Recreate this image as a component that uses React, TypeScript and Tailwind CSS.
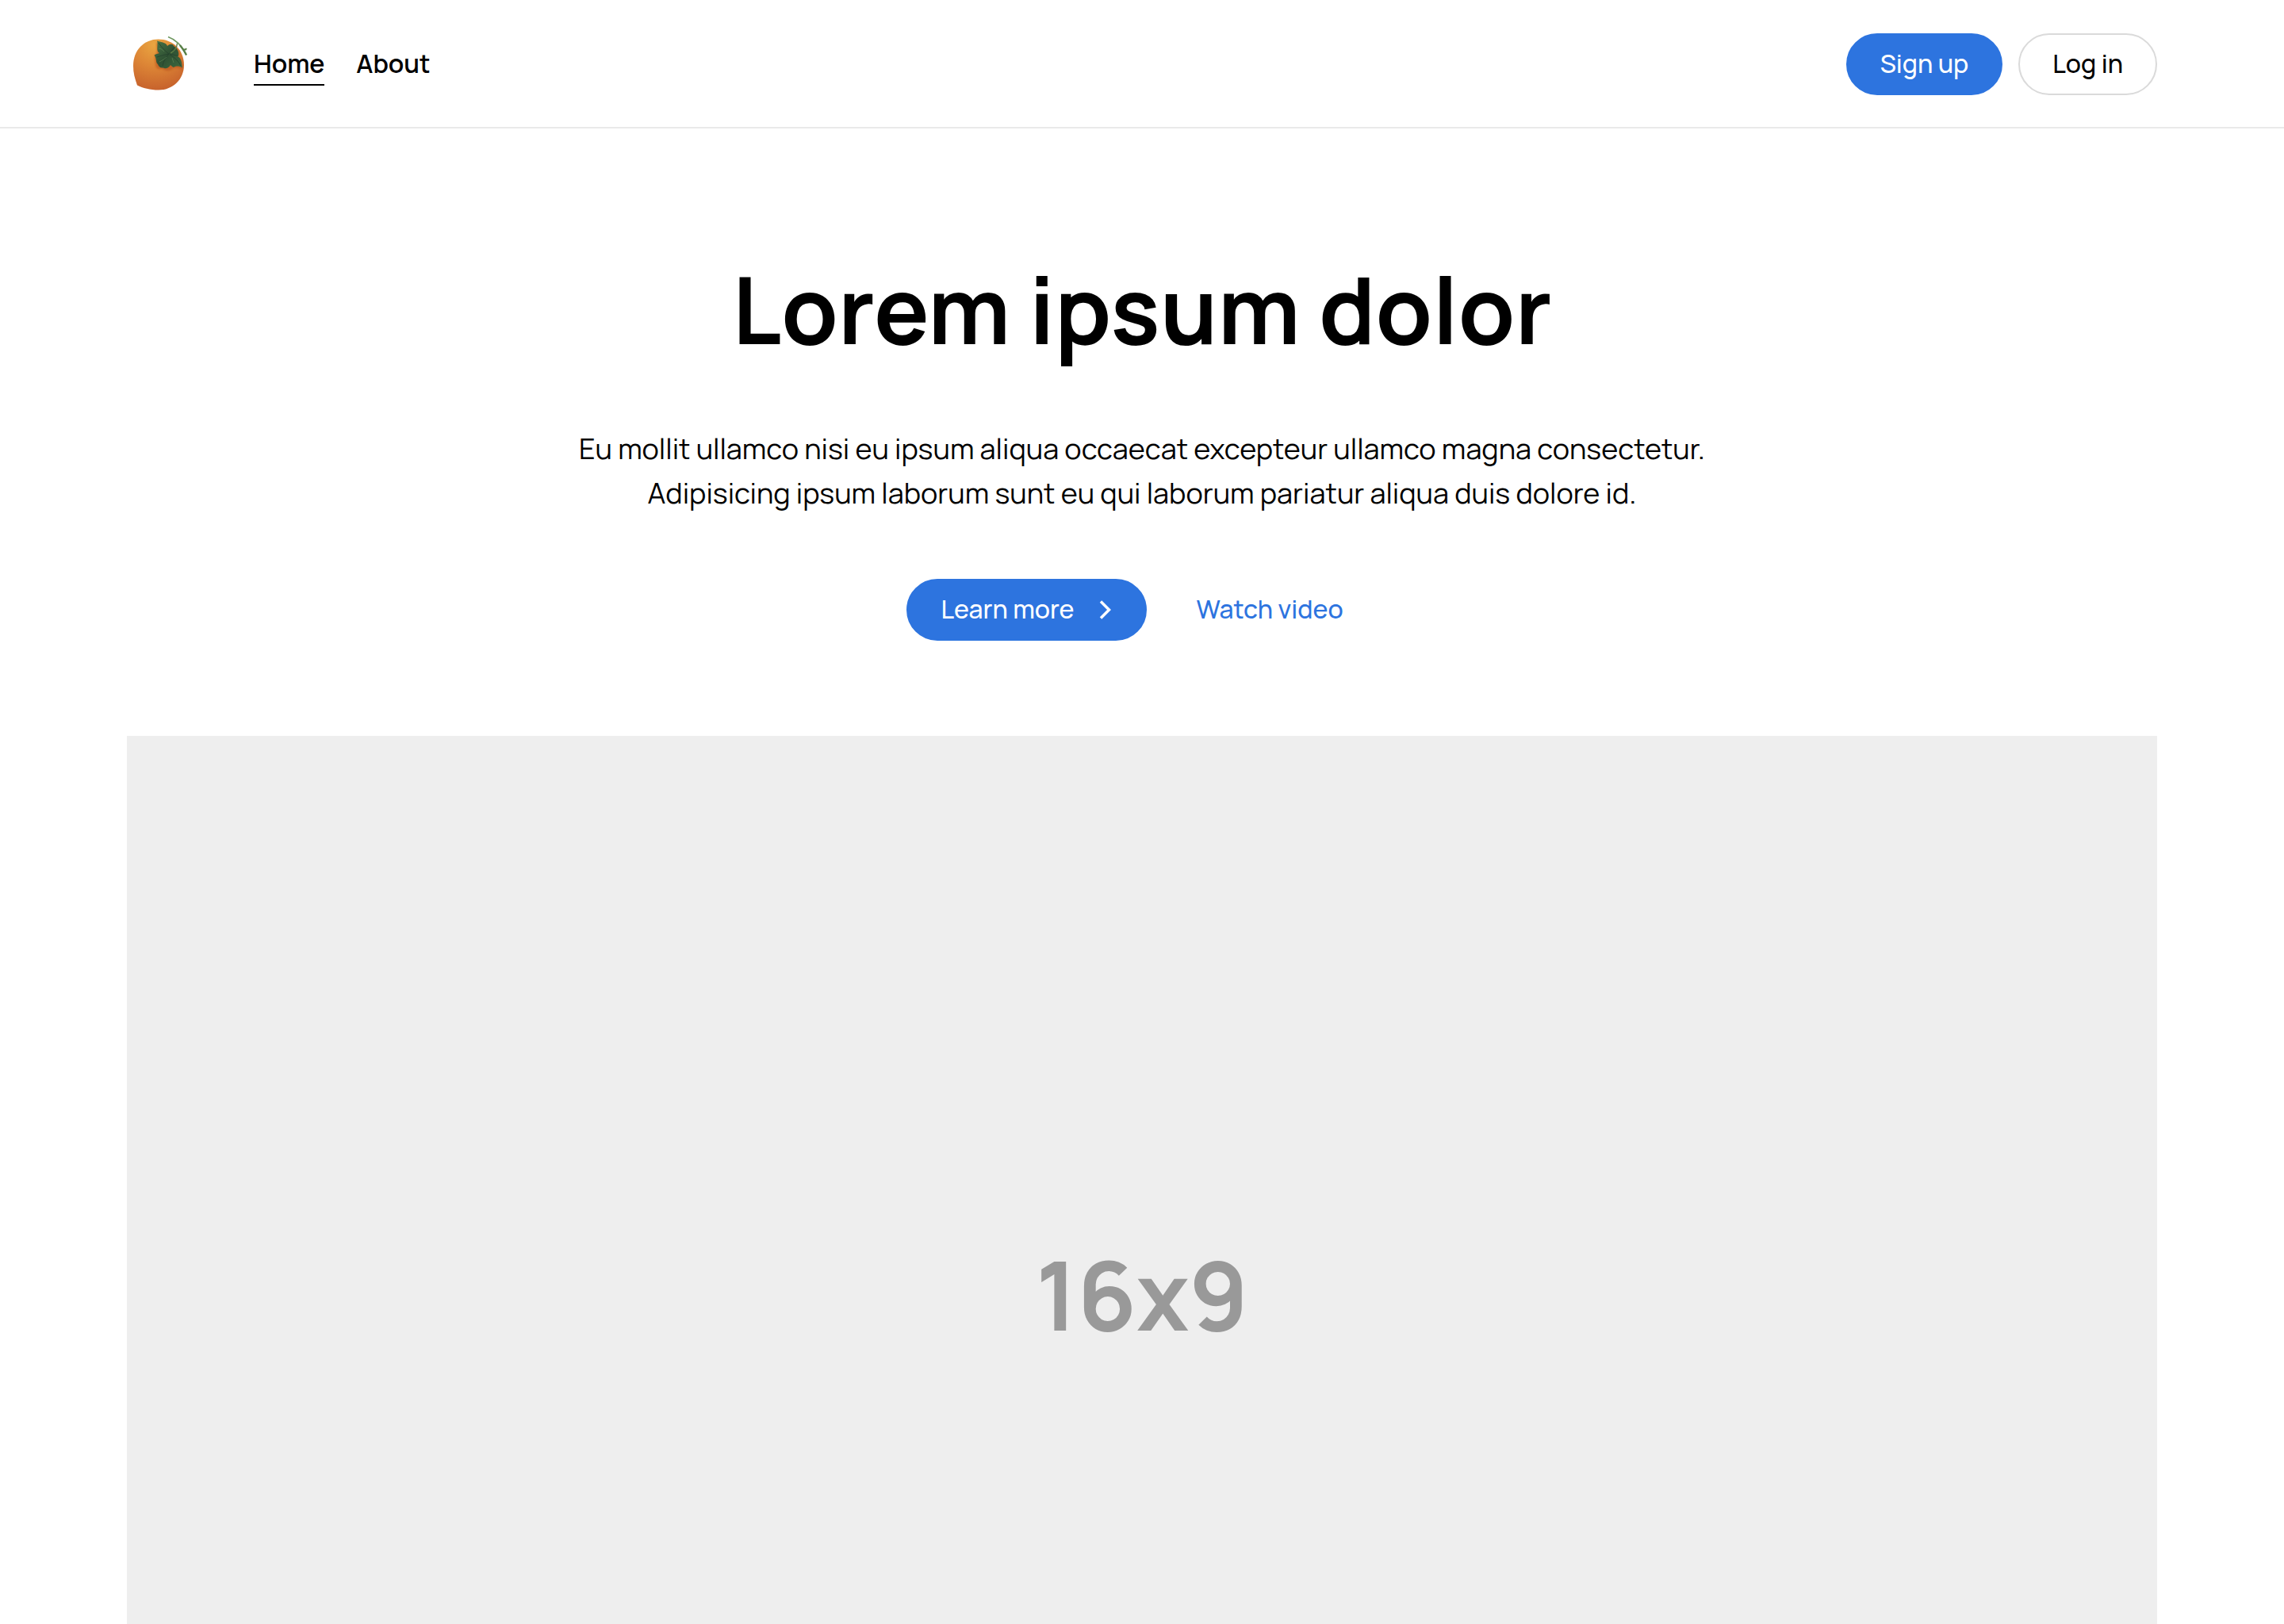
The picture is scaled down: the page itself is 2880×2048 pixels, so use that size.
import React from "react";

function PersimmonLogo() {
  return (
    <svg viewBox="0 20 120 120" className="block size-30" aria-hidden="true">
      <defs>
        <radialGradient id="fruit" cx="0.42" cy="0.1" r="0.95">
          <stop offset="0" stopColor="#eaa641" />
          <stop offset="0.45" stopColor="#dd8636" />
          <stop offset="1" stopColor="#c55f2b" />
        </radialGradient>
        <linearGradient id="leaf" x1="0" y1="0" x2="1" y2="1">
          <stop offset="0" stopColor="#4a7547" />
          <stop offset="0.5" stopColor="#2f5133" />
          <stop offset="1" stopColor="#3f693f" />
        </linearGradient>
        <filter id="soft" x="-20%" y="-20%" width="140%" height="140%">
          <feGaussianBlur stdDeviation="1.2" />
        </filter>
      </defs>
      <path
        d="M33 106.500C30 98 28 91 28 82C28 62 42 48.500 59.500 48.500C78 48.500 92 62 92 81C92 99 78 112.500 60 112.500C49 112.500 40 110 33 106.500Z"
        fill="url(#fruit)"
      />
      <path
        d="M57 52C62 51 69 52 71 57C76 53 80 54 82 57C86 61 87 65 85.500 69C90 72 90.500 78 90 86C86 82 81 83 78 84C75 88 67 87 64 84C60 86 57 84 56 80C56 75 54 70 55.500 67C59 65 58 59 57 52Z"
        transform="translate(0 1.500)"
        fill="#b9531f"
        opacity="0.6"
        filter="url(#soft)"
      />
      <path
        d="M58 50.500C62 52 69 52 71 57C74 54 78 54 79 57C84 60 86 65 85 69.500L84 70C89 73 89 78 90 84.500C86 82 82 82 79 84C77 83 76 82 75 81C73 85 68 86 66 84.500C62 85 60 83 59 80C56 78 58 73 54.500 68.500C57 67 59 67 61 66C56 63 60 56 58 50.500Z"
        fill="url(#leaf)"
      />
      <path
        d="M60 53C64 59 68 63 73 67C68 68 63 69 58 71M73 67C69 71 66 76 65 82M74 68C80 71 85 76 88 82M74 67C76 63 78 61 79 59M74 67C78 68 82 69 84 69"
        fill="none"
        stroke="#233f2b"
        strokeWidth="0.9"
        opacity="0.8"
      />
      <path
        d="M60 60C63 60 65 62 67 64M61 77C65 75 68 73 70 71M79 78L77 72"
        fill="none"
        stroke="#66905c"
        strokeWidth="0.8"
        opacity="0.7"
      />
      <path d="M75 66C79 64 83 60 83.500 53.500" fill="none" stroke="#5d7d45" strokeWidth="1.400" />
      <path
        d="M72 45.500C82 49 89 56 95 68"
        fill="none"
        stroke="#6f9860"
        strokeWidth="1.800"
      />
      <path d="M87 56C90 60 93 64 95 68.500M90.500 61.500L94 61.500L95 60" fill="none" stroke="#587f47" strokeWidth="2.200" />
    </svg>
  );
}

export default function App() {
  return (
    <div className="h-screen overflow-hidden bg-white font-['Manrope','Inter',sans-serif] text-black">
      <header className="px-40 shadow-[inset_0_-2px_0_#eaeaea]">
        <div className="flex h-[162px] items-center justify-between">
          <div className="flex items-center">
            <a href="#" aria-label="Home page" className="-ml-5 mr-15 block">
              <PersimmonLogo />
            </a>
            <nav className="flex items-center gap-10 text-[32px] leading-12 font-semibold">
              <a href="#" aria-current="page" className="border-y-2 border-t-transparent border-b-black pb-0.5">
                Home
              </a>
              <a href="#about" className="border-y-2 border-transparent pb-0.5">
                About
              </a>
            </nav>
          </div>
          <div className="flex items-center gap-5 text-[32px] leading-9 font-medium">
            <button type="button" className="h-[78px] rounded-full border-2 border-[#2d74df] bg-[#2d74df] px-[41px] pb-0.5 text-white">
              Sign up
            </button>
            <button type="button" className="h-[78px] rounded-full border-2 border-[#dadada] bg-white px-[41px] pb-0.5">
              Log in
            </button>
          </div>
        </div>
      </header>
      <main className="px-40">
        <section className="flex flex-col items-center pt-39 pb-30 text-center">
          <h1 className="text-[116px] leading-[144px] font-bold">Lorem ipsum dolor</h1>
          <p className="mt-19 max-w-[1500px] text-[36px] leading-14">
            Eu mollit ullamco nisi eu ipsum aliqua occaecat excepteur ullamco magna consectetur.
            Adipisicing ipsum laborum sunt eu qui laborum pariatur aliqua duis dolore id.
          </p>
          <div className="mt-20 flex items-center gap-5 text-[32px] leading-9 font-medium">
            <button type="button" className="flex h-[78px] items-center gap-5 rounded-full border-2 border-[#2d74df] bg-[#2d74df] px-[41px] pb-0.5 text-white">
              Learn more
              <svg viewBox="0 0 28 28" className="size-7" fill="none" stroke="currentColor" strokeWidth="3.500" aria-hidden="true">
                <path d="M13 4.500L23.500 15L13 25.500" />
              </svg>
            </button>
            <button type="button" className="h-[78px] border-2 border-transparent px-[41px] pb-0.5 text-[#2d74df]">
              Watch video
            </button>
          </div>
        </section>
        <div className="flex aspect-video items-center justify-center bg-[#eeeeee] pb-8 text-[120px] leading-none font-bold text-[#999999]">
          16x9
        </div>
      </main>
    </div>
  );
}
